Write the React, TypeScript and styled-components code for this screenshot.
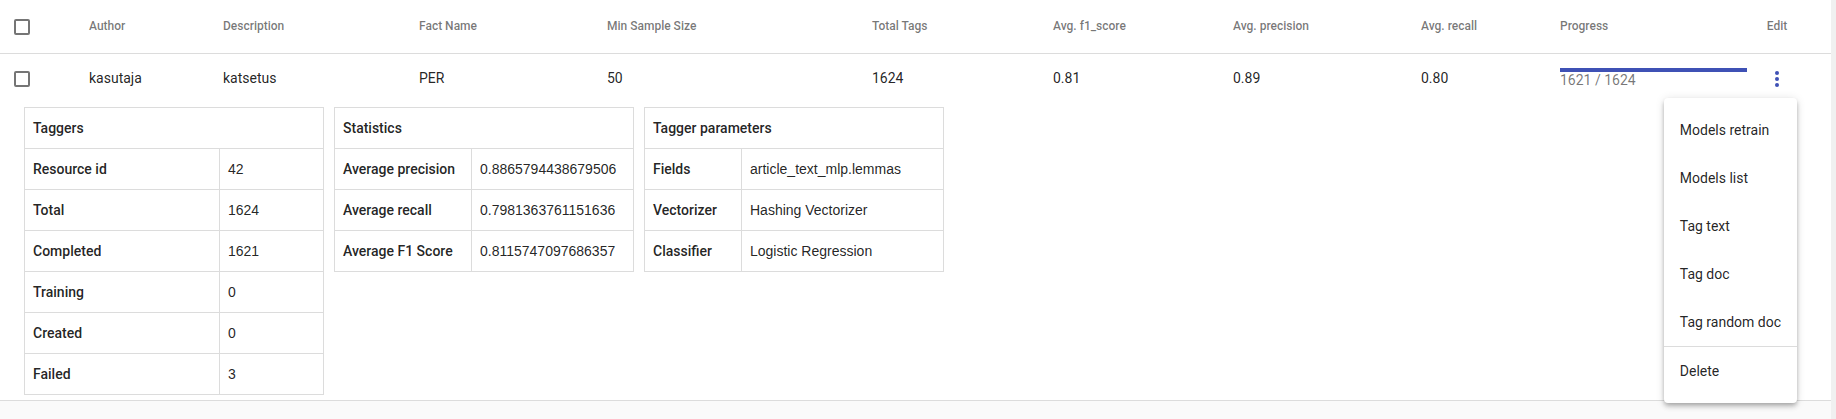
import React, { useState } from 'react';
import styled, { createGlobalStyle } from 'styled-components';

const ink = 'rgba(0, 0, 0, 0.87)';
const muted = 'rgba(0, 0, 0, 0.54)';
const line = '#dcdcdc';
const primary = '#3f51b5';

const GlobalStyle = createGlobalStyle`
  *, *::before, *::after { box-sizing: border-box; }
  body {
    margin: 0;
    background: #fafafa;
    color: ${ink};
    font-family: Roboto, 'Liberation Sans', sans-serif;
    font-size: 14px;
    line-height: 20px;
  }
`;

const Page = styled.main`
  min-height: 100vh;
  border-right: 5px solid #f0f0f0;
`;

const GroupTable = styled.table`
  width: 100%;
  table-layout: fixed;
  border-spacing: 0;
  background: #fff;
`;

const Column = styled.col<{ $width: number }>`
  width: ${(p) => p.$width}px;
`;

const HeadCell = styled.th`
  height: 54px;
  padding: 0 0 2px;
  border-bottom: 1px solid ${line};
  color: ${muted};
  font-size: 12px;
  font-weight: 500;
  text-align: left;
`;

const HeadCheckCell = styled(HeadCell)`
  padding: 0 0 0 14px;
`;

const HeadEditCell = styled(HeadCell)`
  padding-right: 34px;
  text-align: center;
`;

const Cell = styled.td`
  height: 50px;
  padding: 0 0 2px;
`;

const CheckCell = styled(Cell)`
  padding: 0 0 0 14px;
`;

const ProgressCell = styled(Cell)`
  padding: 0 10px 2px 0;
  color: ${muted};
`;

const EditCell = styled(Cell)`
  padding: 0 34px 0 0;
`;

const Checkbox = styled.input`
  display: block;
  appearance: none;
  width: 16px;
  height: 16px;
  margin: 0;
  border: 2px solid #757575;
  border-radius: 2px;
  background: #fff;
  cursor: pointer;

  &:checked {
    border-color: ${primary};
    background: ${primary};
  }
`;

const ProgressLabel = styled.label`
  display: block;
  line-height: 16px;
`;

const ProgressBar = styled.progress`
  display: block;
  appearance: none;
  width: 100%;
  height: 4px;
  border: 0;

  &::-webkit-progress-bar { background: #c5cae9; }
  &::-webkit-progress-value { background: ${primary}; }
`;

const MenuAnchor = styled.div`
  position: relative;
  width: 40px;
  height: 40px;
  margin: 0 auto;
`;

const MenuButton = styled.button`
  display: flex;
  align-items: center;
  justify-content: center;
  width: 40px;
  height: 40px;
  padding: 0;
  border: 0;
  border-radius: 50%;
  background: none;
  color: ${primary};
  cursor: pointer;
`;

const Menu = styled.div`
  position: absolute;
  top: 39px;
  right: 0;
  padding: 8px 0;
  border-radius: 4px;
  background: #fff;
  box-shadow: 0 2px 4px -1px rgba(0, 0, 0, 0.2), 0 4px 5px 0 rgba(0, 0, 0, 0.14),
    0 1px 10px 0 rgba(0, 0, 0, 0.12);
`;

const MenuItem = styled.button`
  display: block;
  width: 100%;
  height: 48px;
  padding: 0 16px;
  border: 0;
  background: none;
  color: ${ink};
  font: inherit;
  text-align: left;
  white-space: nowrap;
  cursor: pointer;

  &:hover { background: rgba(0, 0, 0, 0.04); }
`;

const MenuDivider = styled.hr`
  height: 1px;
  margin: 0;
  border: 0;
  background: ${line};
`;

const DetailCell = styled.td`
  padding: 3px 24px 5px;
  border-bottom: 1px solid ${line};
`;

const DetailPanels = styled.div`
  display: flex;
  align-items: flex-start;
  gap: 10px;
`;

const InfoTable = styled.table`
  width: 300px;
  table-layout: fixed;
  border-collapse: collapse;
`;

const InfoHead = styled.th`
  height: 41px;
  padding: 0 8px;
  border: 1px solid ${line};
  font-weight: 500;
  text-align: left;
`;

const InfoValue = styled.td`
  height: 41px;
  padding: 0 8px;
  border: 1px solid ${line};
  font-family: 'Liberation Sans', Arial, sans-serif;
`;

const columns = [
  { title: 'Author', width: 134 },
  { title: 'Description', width: 196 },
  { title: 'Fact Name', width: 188 },
  { title: 'Min Sample Size', width: 265 },
  { title: 'Total Tags', width: 181 },
  { title: 'Avg. f1_score', width: 180 },
  { title: 'Avg. precision', width: 188 },
  { title: 'Avg. recall', width: 139 },
  { title: 'Progress', width: 197 },
];

const values = ['kasutaja', 'katsetus', 'PER', '50', '1624', '0.81', '0.89', '0.80'];

const panels = [
  {
    title: 'Taggers',
    labelWidth: 195,
    rows: [
      ['Resource id', '42'],
      ['Total', '1624'],
      ['Completed', '1621'],
      ['Training', '0'],
      ['Created', '0'],
      ['Failed', '3'],
    ],
  },
  {
    title: 'Statistics',
    labelWidth: 137,
    rows: [
      ['Average precision', '0.8865794438679506'],
      ['Average recall', '0.7981363761151636'],
      ['Average F1 Score', '0.8115747097686357'],
    ],
  },
  {
    title: 'Tagger parameters',
    labelWidth: 97,
    rows: [
      ['Fields', 'article_text_mlp.lemmas'],
      ['Vectorizer', 'Hashing Vectorizer'],
      ['Classifier', 'Logistic Regression'],
    ],
  },
];

const actions = ['Models retrain', 'Models list', 'Tag text', 'Tag doc', 'Tag random doc'];

function InfoPanel({ title, labelWidth, rows }: (typeof panels)[number]) {
  return (
    <InfoTable>
      <colgroup>
        <Column $width={labelWidth} />
        <col />
      </colgroup>
      <thead>
        <tr>
          <InfoHead colSpan={2}>{title}</InfoHead>
        </tr>
      </thead>
      <tbody>
        {rows.map(([label, value]) => (
          <tr key={label}>
            <InfoHead scope="row">{label}</InfoHead>
            <InfoValue>{value}</InfoValue>
          </tr>
        ))}
      </tbody>
    </InfoTable>
  );
}

function RowMenu() {
  const [open, setOpen] = useState(true);
  return (
    <MenuAnchor>
      <MenuButton
        type="button"
        aria-label="Edit kasutaja"
        aria-haspopup="menu"
        aria-expanded={open}
        onClick={() => setOpen(!open)}
      >
        <svg width="24" height="24" viewBox="0 0 24 24" fill="currentColor" aria-hidden="true">
          <circle cx="12" cy="6" r="2" />
          <circle cx="12" cy="12" r="2" />
          <circle cx="12" cy="18" r="2" />
        </svg>
      </MenuButton>
      {open && (
        <Menu role="menu">
          {actions.map((action) => (
            <MenuItem key={action} type="button" role="menuitem">
              {action}
            </MenuItem>
          ))}
          <MenuDivider />
          <MenuItem type="button" role="menuitem">
            Delete
          </MenuItem>
        </Menu>
      )}
    </MenuAnchor>
  );
}

export default function App() {
  return (
    <>
      <GlobalStyle />
      <Page>
        <GroupTable>
          <colgroup>
            <Column $width={89} />
            {columns.map((column) => (
              <Column key={column.title} $width={column.width} />
            ))}
            <Column $width={74} />
          </colgroup>
          <thead>
            <tr>
              <HeadCheckCell>
                <Checkbox type="checkbox" aria-label="Select all" />
              </HeadCheckCell>
              {columns.map((column) => (
                <HeadCell key={column.title}>{column.title}</HeadCell>
              ))}
              <HeadEditCell>Edit</HeadEditCell>
            </tr>
          </thead>
          <tbody>
            <tr>
              <CheckCell>
                <Checkbox type="checkbox" aria-label="Select kasutaja" />
              </CheckCell>
              {values.map((value, index) => (
                <Cell key={columns[index].title}>{value}</Cell>
              ))}
              <ProgressCell>
                <ProgressBar id="progress" value={1621} max={1624} />
                <ProgressLabel htmlFor="progress">1621 / 1624</ProgressLabel>
              </ProgressCell>
              <EditCell>
                <RowMenu />
              </EditCell>
            </tr>
            <tr>
              <DetailCell colSpan={11}>
                <DetailPanels>
                  {panels.map((panel) => (
                    <InfoPanel key={panel.title} {...panel} />
                  ))}
                </DetailPanels>
              </DetailCell>
            </tr>
          </tbody>
        </GroupTable>
      </Page>
    </>
  );
}
